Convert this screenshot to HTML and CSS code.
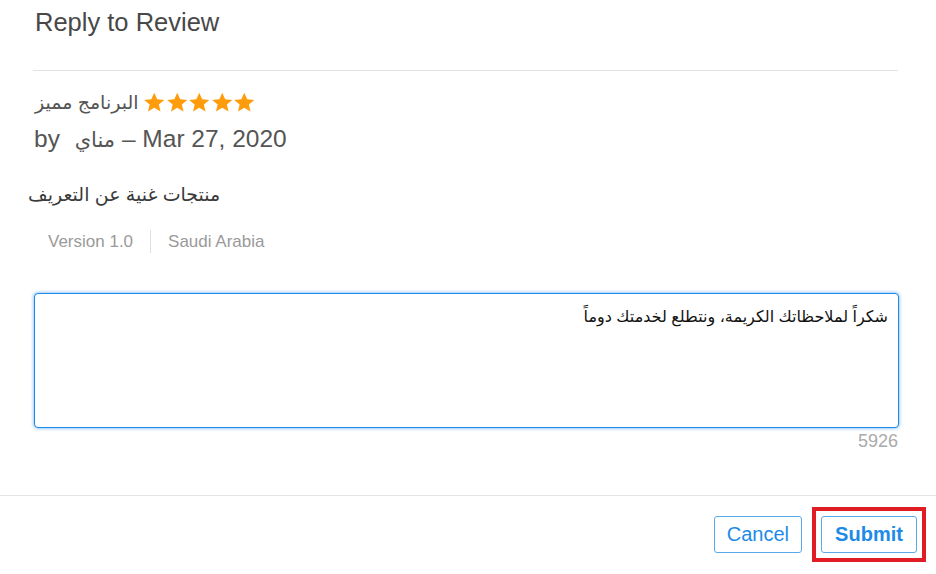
FILE: index.html
```html
<!DOCTYPE html>
<html lang="en">
	<head>
		<meta charset="UTF-8">
		<meta name="viewport" content="width=device-width, initial-scale=1.0">
		<title>Reply to Review</title>
		<link rel="stylesheet" href="styles.css">
	</head>
	<body>
		<div class="modal">
			<div class="modal-body">
				<h1 class="modal-title">Reply to Review</h1>

				<div class="review">
					<div class="review-head">
						<span class="review-title" dir="rtl">البرنامج مميز</span>
						<span class="stars">
							<svg viewBox="0 0 24 24"><path d="M12 1.5l3.1 7.1 7.6.6-5.8 5 1.8 7.5L12 17.7l-6.7 4 1.8-7.5-5.8-5 7.6-.6z"/></svg>
							<svg viewBox="0 0 24 24"><path d="M12 1.5l3.1 7.1 7.6.6-5.8 5 1.8 7.5L12 17.7l-6.7 4 1.8-7.5-5.8-5 7.6-.6z"/></svg>
							<svg viewBox="0 0 24 24"><path d="M12 1.5l3.1 7.1 7.6.6-5.8 5 1.8 7.5L12 17.7l-6.7 4 1.8-7.5-5.8-5 7.6-.6z"/></svg>
							<svg viewBox="0 0 24 24"><path d="M12 1.5l3.1 7.1 7.6.6-5.8 5 1.8 7.5L12 17.7l-6.7 4 1.8-7.5-5.8-5 7.6-.6z"/></svg>
							<svg viewBox="0 0 24 24"><path d="M12 1.5l3.1 7.1 7.6.6-5.8 5 1.8 7.5L12 17.7l-6.7 4 1.8-7.5-5.8-5 7.6-.6z"/></svg>
						</span>
					</div>
					<div class="review-author">by <span class="author-name" dir="rtl">مناي</span> – Mar 27, 2020</div>
					<p class="review-text" dir="rtl">منتجات غنية عن التعريف</p>
					<div class="review-meta">
						<span>Version 1.0</span>
						<span class="meta-sep"></span>
						<span>Saudi Arabia</span>
					</div>
				</div>

				<textarea class="reply-input" dir="rtl">شكراً لملاحظاتك الكريمة، ونتطلع لخدمتك دوماً</textarea>
				<div class="char-count">5926</div>
			</div>

			<div class="modal-footer">
				<button class="btn">Cancel</button>
				<span class="highlight">
					<button class="btn btn-primary">Submit</button>
				</span>
			</div>
		</div>
	</body>
</html>
```

FILE: styles.css
```css
:root {
    --blue: #1d8ae8;
    --blue-border: #5aaaea;
    --text: #4a4a4a;
    --muted: #9a9a9a;
    --line: #e3e3e3;
}

* {
    box-sizing: border-box;
    margin: 0;
    padding: 0;
}

body {
    font-family: 'Liberation Sans', 'DejaVu Sans', Arial, sans-serif;
    background: #fff;
    color: var(--text);
}

.modal {
    width: 936px;
    height: 574px;
}

.modal-body {
    padding: 0 38px 0 33px;
}

/* Title */
.modal-title {
    font-size: 25.5px;
    font-weight: 500;
    line-height: 30px;
    padding: 7px 0 0 2px;
    height: 71px;
    border-bottom: 1px solid var(--line);
    color: #484848;
}

/* Review */
.review {
    padding-top: 18px;
}

.review-head {
    display: flex;
    align-items: center;
    gap: 5px;
    height: 26px;
    padding-left: 2px;
}

.review-title {
    font-size: 19px;
    color: #555;
}

.stars {
    display: flex;
}

.stars svg {
    width: 22.5px;
    height: 23px;
    fill: #ff9c0c;
}

.review-author {
    font-size: 24.5px;
    line-height: 30px;
    margin-top: 9px;
    padding-left: 1px;
    color: #555;
}

.author-name {
    margin-left: 8px;
    font-size: 21px;
}

.review-text {
    font-size: 19px;
    line-height: 28px;
    margin-top: 26px;
    margin-left: -5px;
    color: #3a3a3a;
    width: fit-content;
    white-space: nowrap;
}

.review-meta {
    display: flex;
    align-items: center;
    gap: 17px;
    margin-top: 21px;
    padding-left: 15px;
    font-size: 17px;
    color: var(--muted);
}

.meta-sep {
    width: 1px;
    height: 23px;
    background: #e0e0e0;
}

/* Reply box */
.reply-input {
    display: block;
    width: 100%;
    height: 135px;
    margin-top: 40px;
    margin-left: 1px;
    padding: 13px 10px;
    border: 1.5px solid var(--blue);
    border-radius: 4px;
    box-shadow: 0 0 3px 1px rgba(40, 140, 240, 0.45);
    font-family: 'Liberation Sans', 'DejaVu Sans', Arial, sans-serif;
    font-size: 16px;
    color: #111;
    resize: none;
    outline: none;
}

.char-count {
    text-align: right;
    font-size: 18px;
    line-height: 20px;
    margin-top: 3px;
    color: #aaa;
}

/* Footer */
.modal-footer {
    margin-top: 44px;
    border-top: 1px solid var(--line);
    display: flex;
    justify-content: flex-end;
    align-items: center;
    gap: 10px;
    padding: 11px 10px 0 0;
}

.btn {
    height: 37px;
    padding: 0 12px;
    background: #fff;
    border: 1px solid var(--blue-border);
    border-radius: 3px;
    font-family: 'Liberation Sans', Arial, sans-serif;
    font-size: 20px;
    color: var(--blue);
    cursor: pointer;
}

.btn-primary {
    font-weight: 700;
    width: 96px;
    padding: 0;
}

.highlight {
    display: inline-flex;
    border: 4px solid #e01c25;
    padding: 5px;
}
```
